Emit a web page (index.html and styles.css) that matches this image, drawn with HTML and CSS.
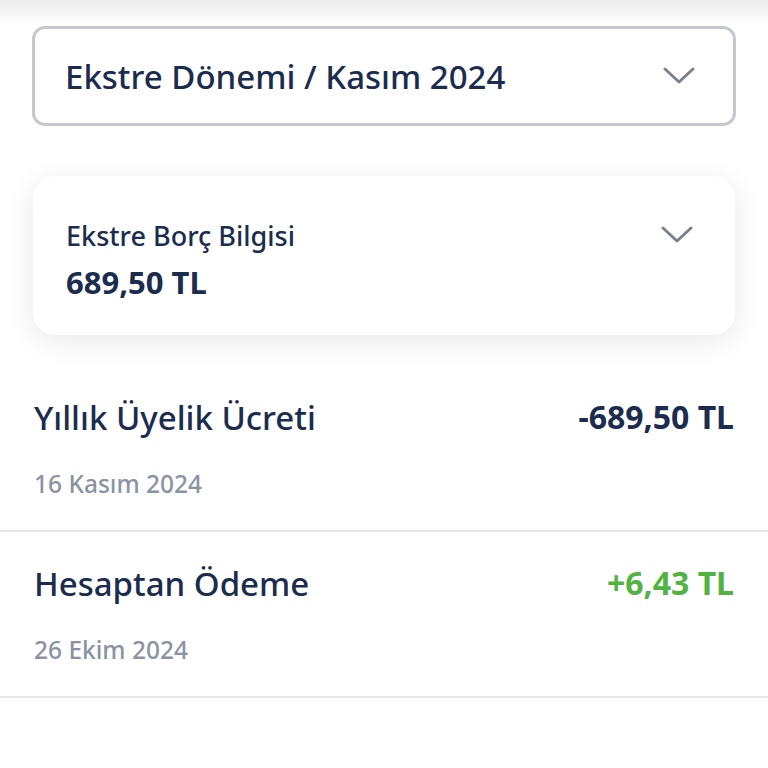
FILE: index.html
```html
<!DOCTYPE html>
<html lang="tr">
<head>
    <meta charset="UTF-8">
    <meta name="viewport" content="width=device-width, initial-scale=1.0">
    <title>Ekstre</title>
    <link rel="stylesheet" href="styles.css">
</head>
<body>

<div class="period">
    <div class="period-select">
        <span class="period-text">Ekstre Dönemi / Kasım 2024</span>
        <svg class="chevron" width="32" height="18" viewBox="0 0 32 18"><path d="M2 2 L16 15 L30 2" fill="none" stroke="#7b808d" stroke-width="3" stroke-linecap="round" stroke-linejoin="round"/></svg>
    </div>
</div>

<div class="summary">
    <div class="summary-card">
        <div>
            <div class="summary-label">Ekstre Borç Bilgisi</div>
            <div class="summary-amount">689,50 TL</div>
        </div>
        <svg class="chevron" width="32" height="18" viewBox="0 0 32 18"><path d="M2 2 L16 15 L30 2" fill="none" stroke="#7b808d" stroke-width="3" stroke-linecap="round" stroke-linejoin="round"/></svg>
    </div>
</div>

<div class="transactions">
    <div class="tx-row">
        <div class="tx-top">
            <span class="tx-title">Yıllık Üyelik Ücreti</span>
            <span class="tx-amount">-689,50 TL</span>
        </div>
        <div class="tx-date">16 Kasım 2024</div>
    </div>
    <div class="tx-row">
        <div class="tx-top">
            <span class="tx-title">Hesaptan Ödeme</span>
            <span class="tx-amount plus">+6,43 TL</span>
        </div>
        <div class="tx-date">26 Ekim 2024</div>
    </div>
</div>

</body>
</html>
```

FILE: styles.css
```css
body {
    margin: 0;
    background-color: #fff;
    font-family: "Noto Sans", "Open Sans", sans-serif;
    font-weight: 500;
    color: #1b2c4e;
}

.period {
    padding: 26px 32px 50px 32px;
    background: linear-gradient(#ececec, #fff 26px);
}

.period-select {
    height: 94px;
    border: 3px solid #c6c8cd;
    border-radius: 13px;
    background-color: #fff;
    display: flex;
    align-items: center;
    justify-content: space-between;
    padding: 0 38px 0 30px;
}

.period-text {
    font-size: 33px;
}

.summary {
    padding: 0 33px 31px 33px;
}

.summary-card {
    background-color: #fff;
    border-radius: 22px;
    box-shadow: 0 6px 30px rgba(0, 0, 0, 0.09);
    padding: 41px 42px 32px 33px;
    display: flex;
    justify-content: space-between;
    align-items: flex-start;
}

.summary-card .chevron {
    margin-top: 9px;
}

.summary-label {
    font-size: 27px;
}

.summary-amount {
    font-size: 31px;
    font-weight: bold;
    margin-top: 7px;
}

.transactions {
    background-color: #fff;
}

.tx-row {
    height: 166px;
    border-bottom: 2px solid #e8e8e8;
    padding: 0 34px;
    box-sizing: border-box;
}

.tx-top {
    display: flex;
    justify-content: space-between;
    padding-top: 29px;
}

.tx-title {
    font-size: 33px;
}

.tx-amount {
    font-size: 32px;
    font-weight: bold;
}

.tx-amount.plus {
    color: #51b442;
}

.tx-date {
    font-size: 24.5px;
    color: #8a93a3;
    margin-top: 27px;
}
```
